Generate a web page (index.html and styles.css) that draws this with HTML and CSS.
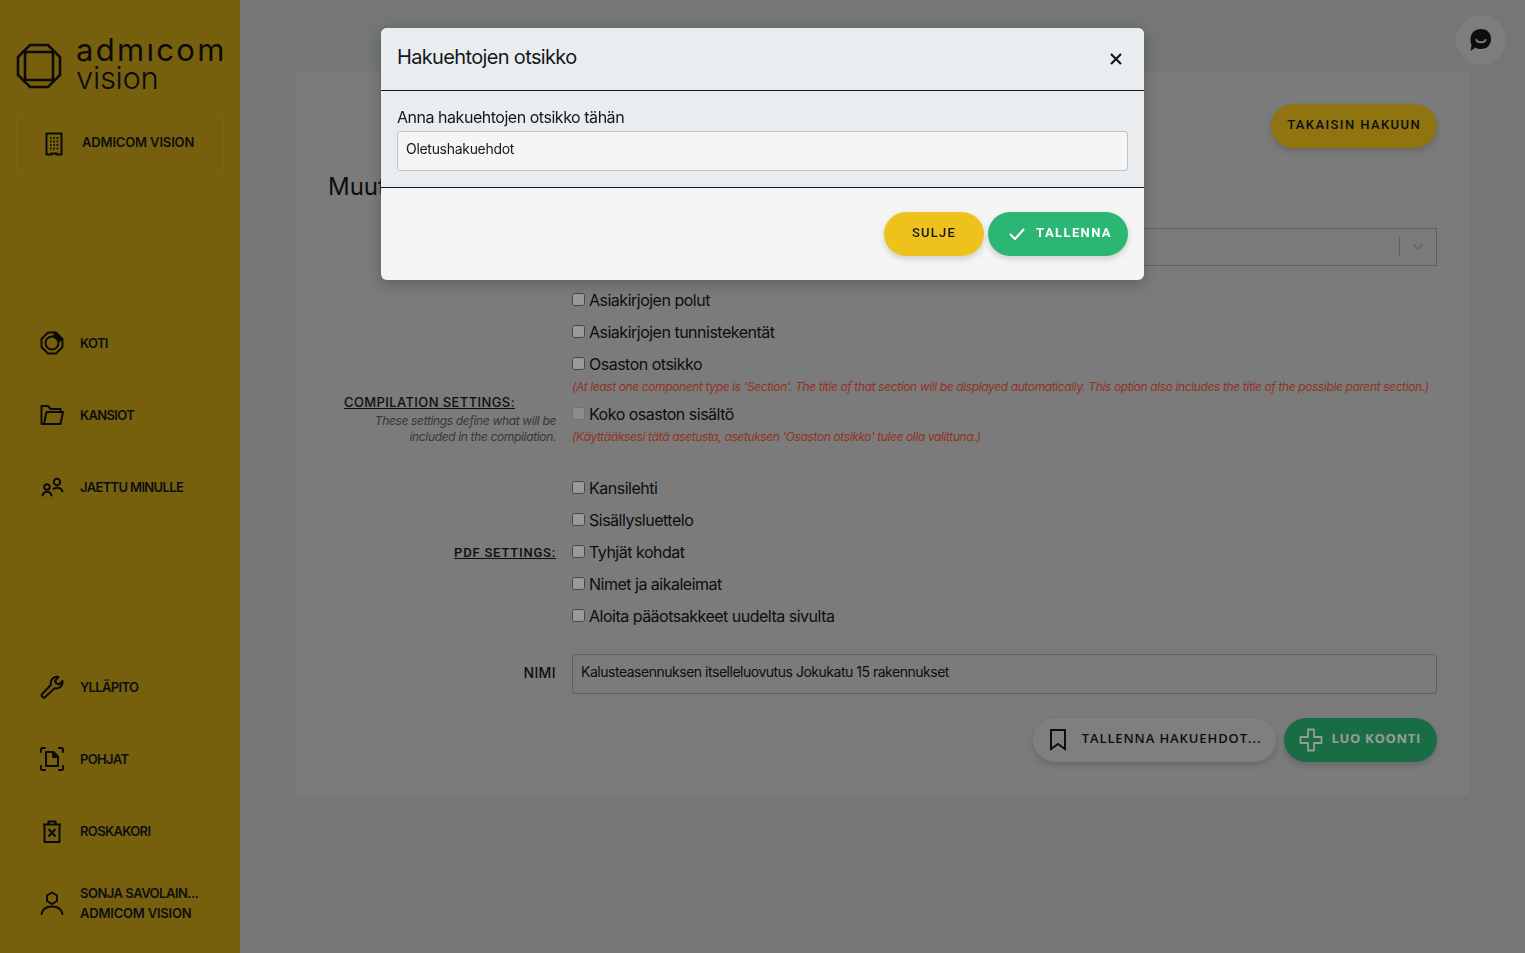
FILE: index.html
```html
<!DOCTYPE html>
<html>
<head>
  <title>Admicom Vision</title>
  <link rel="stylesheet" href="styles.css">
</head>
<body>
  <div class="sidebar">
    <div class="logo">
      <svg class="logo-mark" width="46" height="46" viewBox="0 0 46 46" fill="none" stroke="#14130c" stroke-width="2.600">
        <path d="M14 2h18l12 12v18L32 44H14L2 32V14z"/>
        <rect x="9" y="9" width="28" height="28" rx="2"/>
      </svg>
      <div class="logo-text">
        <div class="logo-top">admıcom</div>
        <div class="logo-bottom">vision</div>
      </div>
    </div>
    <div class="company">
      <svg width="24" height="24" viewBox="0 0 24 24" fill="none" stroke="#14130c" stroke-width="2">
        <path d="M4.500 1.500h15v21h-5v-1h-5v1h-5z"/>
        <path d="M8 6h1.500M11.300 6h1.500M14.600 6h1.500M8 9.500h1.500M11.300 9.500h1.500M14.600 9.500h1.500M8 13h1.500M11.300 13h1.500M14.600 13h1.500M8 16.500h1.500M11.300 16.500h1.500M14.600 16.500h1.500"/>
      </svg>
      <span class="company-name">ADMICOM VISION</span>
    </div>

    <div class="nav nav-top">
      <div class="nav-item">
        <svg width="24" height="24" viewBox="0 0 24 24" fill="none" stroke="#14130c" stroke-width="2">
          <path d="M8 1.500h8l6.500 6.500v8L16 22.500H8L1.500 16V8z"/>
          <circle cx="12" cy="12" r="6.500"/>
          <path d="M15 2.500l6.500 6.500-3 1-4.500-5z" fill="#14130c"/>
        </svg>
        <span>KOTI</span>
      </div>
      <div class="nav-item">
        <svg width="24" height="24" viewBox="0 0 24 24" fill="none" stroke="#14130c" stroke-width="2" stroke-linejoin="round">
          <path d="M4 21H1.500V3h6.500l2.500 3h10V9"/>
          <path d="M4 21l2.500-12H23l-2.500 12z"/>
        </svg>
        <span>KANSIOT</span>
      </div>
      <div class="nav-item">
        <svg width="24" height="24" viewBox="0 0 24 24" fill="none" stroke="#14130c" stroke-width="2" stroke-linecap="round">
          <circle cx="7" cy="12" r="2.800"/>
          <circle cx="17" cy="7" r="3.200"/>
          <path d="M2.500 20.500c.5-2.500 2-3.800 4.500-3.800s4 1.300 4.500 3.800"/>
          <path d="M13.500 14c1-.8 2.200-1.200 3.500-1.200 2.800 0 4.500 1.200 5.500 3.500"/>
        </svg>
        <span>JAETTU MINULLE</span>
      </div>
    </div>

    <div class="nav nav-bottom">
      <div class="nav-item">
        <svg width="24" height="24" viewBox="0 0 24 24" fill="none" stroke="#14130c" stroke-width="2" stroke-linejoin="round">
          <path d="M1.800 19.500L11 9.700C10 6 12.500 1.800 17.500 1.800l1 .3-3.500 3.700 1.300 2.700 3 .8 3.200-3.400c.8 4.500-3.300 8.500-8 7.300L5 22.300c-1.500 1-4-1-3.200-2.800z"/>
        </svg>
        <span>YLLÄPITO</span>
      </div>
      <div class="nav-item">
        <svg width="24" height="24" viewBox="0 0 24 24" fill="none" stroke="#14130c" stroke-width="2" stroke-linecap="round" stroke-linejoin="round">
          <path d="M1 5V2.500Q1 1 2.500 1H5M19 1h2.500Q23 1 23 2.500V5M23 19v2.500Q23 23 21.500 23H19M5 23H2.500Q1 23 1 21.500V19"/>
          <path d="M6 5h7.500l4.500 4.500V19H6z"/>
          <path d="M13 5.500V10h4.500" fill="#14130c"/>
        </svg>
        <span>POHJAT</span>
      </div>
      <div class="nav-item">
        <svg width="24" height="24" viewBox="0 0 24 24" fill="none" stroke="#14130c" stroke-width="2" stroke-linejoin="round">
          <path d="M3 5.500h18M8.500 5.500V2.500h7v3"/>
          <path d="M4.500 5.500V23h15V5.500"/>
          <path d="M8.500 10l7 7.500M15.500 10l-7 7.500"/>
        </svg>
        <span>ROSKAKORI</span>
      </div>
      <div class="nav-item">
        <svg width="24" height="24" viewBox="0 0 24 24" fill="none" stroke="#14130c" stroke-width="2" stroke-linecap="round">
          <path d="M12 1.500l5 3v5.500l-5 3-5-3V4.500z"/>
          <path d="M1.500 23c1-5 5-7.500 10.500-7.500S21.500 18 22.500 23"/>
        </svg>
        <div class="user-lines">
          <div class="user-name">SONJA SAVOLAIN...</div>
          <div class="user-org">ADMICOM VISION</div>
        </div>
      </div>
    </div>
  </div>

  <div class="main">
    <div class="card">
      <div class="card-top">
        <button class="btn btn-yellow">TAKAISIN HAKUUN</button>
      </div>
      <h2 class="card-title">Muuta koontia</h2>

      <div class="form-row select-row">
        <div class="row-label"></div>
        <div class="fake-select">
          <span class="select-sep"></span>
          <svg width="12" height="8" viewBox="0 0 12 8" fill="none" stroke="#b0b0b0" stroke-width="2"><path d="M1 1l5 5 5-5"/></svg>
        </div>
      </div>

      <div class="form-row settings-row">
        <div class="row-label compilation-label">
          <div class="section-label">COMPILATION SETTINGS:</div>
          <div class="section-help">These settings define what will be included in the compilation.</div>
        </div>
        <div class="checks">
          <label class="check"><input type="checkbox">Asiakirjojen polut</label>
          <label class="check"><input type="checkbox">Asiakirjojen tunnistekentät</label>
          <label class="check"><input type="checkbox">Osaston otsikko</label>
          <div class="warn warn-first">(At least one component type is 'Section'. The title of that section will be displayed automatically. This option also includes the title of the possible parent section.)</div>
          <label class="check"><input type="checkbox" disabled>Koko osaston sisältö</label>
          <div class="warn warn-last">(Käyttääksesi tätä asetusta, asetuksen 'Osaston otsikko' tulee olla valittuna.)</div>
        </div>
      </div>

      <div class="form-row settings-row pdf-row">
        <div class="row-label">
          <div class="pdf-label">PDF SETTINGS:</div>
        </div>
        <div class="checks">
          <label class="check"><input type="checkbox">Kansilehti</label>
          <label class="check"><input type="checkbox">Sisällysluettelo</label>
          <label class="check"><input type="checkbox">Tyhjät kohdat</label>
          <label class="check"><input type="checkbox">Nimet ja aikaleimat</label>
          <label class="check"><input type="checkbox">Aloita pääotsakkeet uudelta sivulta</label>
        </div>
      </div>

      <div class="form-row name-row">
        <div class="row-label name-label">NIMI</div>
        <input class="text-input name-input" value="Kalusteasennuksen itselleluovutus Jokukatu 15 rakennukset">
      </div>

      <div class="card-actions">
        <button class="btn btn-light">
          <svg width="18" height="22" viewBox="0 0 18 22" fill="none" stroke="#14181b" stroke-width="2"><path d="M2 1h14v19l-7-5-7 5z"/></svg>
          <span>TALLENNA HAKUEHDOT...</span>
        </button>
        <button class="btn btn-green">
          <svg width="24" height="24" viewBox="0 0 24 24" fill="none" stroke="#fff" stroke-width="1.800"><path d="M9 1.500h6V9h7.500v6H15v7.500H9V15H1.500V9H9z" stroke-linejoin="round"/></svg>
          <span>LUO KOONTI</span>
        </button>
      </div>
    </div>
  </div>

  <div class="chat">
    <svg width="26" height="26" viewBox="0 0 26 26">
      <path d="M13 2c6 0 10 4 10 10s-4 10-10 10c-2 0-4-.5-5.500-1.500L2.500 24l1-6C2.500 16 2.500 14 2.500 12 2.500 6 7 2 13 2z" fill="#14181b"/>
      <path d="M8.500 13c1 3 8 3 9 0" fill="none" stroke="#cfd1d1" stroke-width="2" stroke-linecap="round"/>
    </svg>
  </div>

  <div class="overlay">
    <div class="modal">
      <div class="modal-header">
        <h3 class="modal-title">Hakuehtojen otsikko</h3>
        <svg class="modal-close" width="12" height="12" viewBox="0 0 12 12" stroke="#14181b" stroke-width="2.200"><path d="M1 1l10 10M11 1L1 11"/></svg>
      </div>
      <div class="modal-body">
        <label class="modal-label">Anna hakuehtojen otsikko tähän</label>
        <input class="text-input" value="Oletushakuehdot">
      </div>
      <div class="modal-footer">
        <button class="btn btn-sulje">SULJE</button>
        <button class="btn btn-save">
          <svg width="18" height="14" viewBox="0 0 18 14" fill="none" stroke="#fff" stroke-width="2"><path d="M2 7l5 5L16 2"/></svg>
          <span>TALLENNA</span>
        </button>
      </div>
    </div>
  </div>
</body>
</html>
```

FILE: styles.css
```css
html, body {
  height: 100%;
  margin: 0;
  padding: 0;
  overflow: hidden;
}

body {
  display: flex;
  background-color: #c3c6c6;
  color: #14181b;
  font-family: Inter, "Liberation Sans", sans-serif;
}

/* sidebar */
.sidebar {
  width: 240px;
  flex-shrink: 0;
  height: 953px;
  box-sizing: border-box;
  background-color: #c6a017;
  padding: 34px 16px 0 16px;
  display: flex;
  flex-direction: column;
}

.logo {
  display: flex;
  align-items: center;
  gap: 14px;
  height: 58px;
}

.logo-mark {
  flex-shrink: 0;
  margin-top: 6px;
}

.logo-top {
  font-size: 31px;
  line-height: 28px;
  letter-spacing: 2.3px;
  color: #14130c;
}

.logo-bottom {
  font-size: 31px;
  font-weight: 300;
  line-height: 27px;
  letter-spacing: -0.3px;
  color: #14130c;
}

.company {
  margin-top: 20px;
  height: 63px;
  box-sizing: border-box;
  border: 1px solid #cfa81c;
  border-radius: 3px;
  display: flex;
  align-items: center;
  gap: 16px;
  padding-left: 25px;
  font-size: 13px;
  font-weight: 600;
  letter-spacing: -0.15px;
}

.company-name {
  padding-bottom: 3px;
}

.nav {
  display: flex;
  flex-direction: column;
  gap: 48px;
  padding-left: 24px;
}

.nav-top {
  margin-top: 156px;
}

.nav-bottom {
  margin-top: 176px;
}

.nav-item {
  height: 24px;
  display: flex;
  align-items: center;
  gap: 16px;
  font-size: 13px;
  font-weight: 600;
  letter-spacing: -0.65px;
  white-space: nowrap;
}

.user-lines {
  line-height: 20px;
}

.user-name {
  letter-spacing: -0.5px;
}

.user-org {
  letter-spacing: -0.2px;
}

/* main */
.main {
  flex: 1;
  min-width: 0;
  padding: 71px 56px 0 56px;
}

.card {
  height: 724px;
  box-sizing: border-box;
  background-color: #cdcdcd;
  padding: 33px 32px;
  display: flex;
  flex-direction: column;
}

.card-top {
  display: flex;
  justify-content: flex-end;
}

.card-title {
  margin: 25px 0 0 0;
  font-size: 24px;
  line-height: 28px;
  font-weight: 400;
}

.form-row {
  display: grid;
  grid-template-columns: 228px minmax(0, 1fr);
  column-gap: 16px;
}

.select-row {
  margin-top: 27px;
}

.fake-select {
  height: 38px;
  box-sizing: border-box;
  border: 1px solid #9e9e9e;
  display: flex;
  align-items: center;
  justify-content: flex-end;
  gap: 12px;
  padding-right: 12px;
}

.select-sep {
  width: 1px;
  height: 20px;
  background-color: #9e9e9e;
}

.settings-row {
  margin-top: 18px;
  align-items: center;
}

.pdf-row {
  margin-top: 24px;
}

.row-label {
  text-align: right;
}

.compilation-label {
  align-self: end;
  margin-bottom: 3px;
}

.section-label {
  margin-right: 41px;
  font-size: 13px;
  font-weight: 500;
  letter-spacing: 0.4px;
  text-decoration: underline;
}

.pdf-label {
  font-family: Roboto, sans-serif;
  font-size: 13px;
  font-weight: 500;
  letter-spacing: 0.8px;
  text-decoration: underline;
}

.section-help {
  margin: 3px 0 0 auto;
  width: 190px;
  font-size: 12px;
  line-height: 16px;
  font-style: italic;
  color: #5e5e5e;
  letter-spacing: -0.35px;
}

.checks {
  display: flex;
  flex-direction: column;
}

.check {
  height: 32px;
  display: flex;
  align-items: center;
  font-size: 16px;
  letter-spacing: -0.5px;
}

.check input {
  margin: 0 4px 2px 0;
}

.warn {
  font-size: 12px;
  line-height: 14px;
  font-style: italic;
  color: #f0583a;
  letter-spacing: -0.38px;
  white-space: nowrap;
}

.warn-first {
  margin-bottom: 4px;
}

.warn-last {
  margin-bottom: 4px;
}

.name-row {
  margin-top: 22px;
  align-items: center;
}

.name-label {
  font-size: 14px;
  font-weight: 500;
  letter-spacing: 0.4px;
  padding-bottom: 3px;
}

.text-input {
  height: 40px;
  box-sizing: border-box;
  width: 100%;
  padding: 0 8px 6px 8px;
  border: 1px solid #c2c2c2;
  border-radius: 3px;
  background-color: #f5f5f5;
  font-family: inherit;
  font-size: 14px;
  letter-spacing: -0.3px;
  color: #14181b;
}

.name-input {
  background-color: #cdcdcd;
  border-color: #9e9e9e;
  letter-spacing: -0.48px;
}

.card-actions {
  margin-top: 24px;
  display: flex;
  justify-content: flex-end;
  gap: 8px;
}

/* buttons */
.btn {
  height: 44px;
  border: none;
  border-radius: 22px;
  padding: 0 16px 0 16px;
  display: inline-flex;
  align-items: center;
  font-family: Roboto, sans-serif;
  font-size: 13px;
  font-weight: 500;
  letter-spacing: 1.300px;
  box-shadow: 0 3px 6px rgba(0, 0, 0, 0.16);
  color: #14181b;
}

.btn-yellow {
  background-color: #eec11c;
  padding-bottom: 4px;
  letter-spacing: 1.400px;
}

.btn-light {
  background-color: #d4d4d4;
  font-family: "Open Sans", sans-serif;
  font-weight: 600;
  letter-spacing: 0.9px;
  padding-right: 15px;
  gap: 15px;
}

.btn-light span {
  padding-bottom: 4px;
}

.btn-green {
  background-color: #2bb673;
  color: #fff;
  font-family: "Open Sans", sans-serif;
  font-weight: 700;
  letter-spacing: 0.7px;
  padding-left: 15px;
  gap: 8px;
}

.btn-green span {
  padding-bottom: 4px;
}

.btn-sulje {
  background-color: #eec11c;
  padding: 0 28px 4px 28px;
  letter-spacing: 1.250px;
}

.btn-save {
  background-color: #2bb673;
  color: #fff;
  font-weight: 700;
  letter-spacing: 1.400px;
  padding-left: 20px;
  gap: 10px;
}

.btn-save span {
  padding-bottom: 4px;
}

.chat {
  position: absolute;
  top: 15px;
  left: 1456px;
  width: 50px;
  height: 50px;
  border-radius: 50%;
  background-color: #cfd1d1;
  display: flex;
  align-items: center;
  justify-content: center;
}

/* overlay and modal */
.overlay {
  position: fixed;
  top: 0;
  left: 0;
  right: 0;
  bottom: 0;
  background-color: rgba(0, 0, 0, 0.4);
  display: flex;
  justify-content: center;
  align-items: flex-start;
  padding-top: 28px;
}

.modal {
  width: 763px;
  height: 252px;
  background-color: #f5f5f5;
  border-radius: 6px;
  overflow: hidden;
  box-shadow: 0 4px 16px rgba(0, 0, 0, 0.25);
}

.modal-header {
  height: 63px;
  box-sizing: border-box;
  background-color: #e9edef;
  border-bottom: 1px solid #14181b;
  display: flex;
  align-items: center;
  justify-content: space-between;
  padding: 0 16px;
}

.modal-title {
  margin: 0 0 4px 0;
  font-size: 20px;
  font-weight: 400;
  letter-spacing: -0.65px;
}

.modal-close {
  margin-right: 6px;
}

.modal-body {
  height: 97px;
  box-sizing: border-box;
  background-color: #e9edef;
  border-bottom: 1px solid #14181b;
  padding: 16px 16px 0 16px;
}

.modal-label {
  display: block;
  font-size: 16px;
  line-height: 20px;
  letter-spacing: -0.47px;
  margin-bottom: 4px;
}

.modal-footer {
  display: flex;
  justify-content: flex-end;
  gap: 4px;
  padding: 24px 16px 0 16px;
}
```
